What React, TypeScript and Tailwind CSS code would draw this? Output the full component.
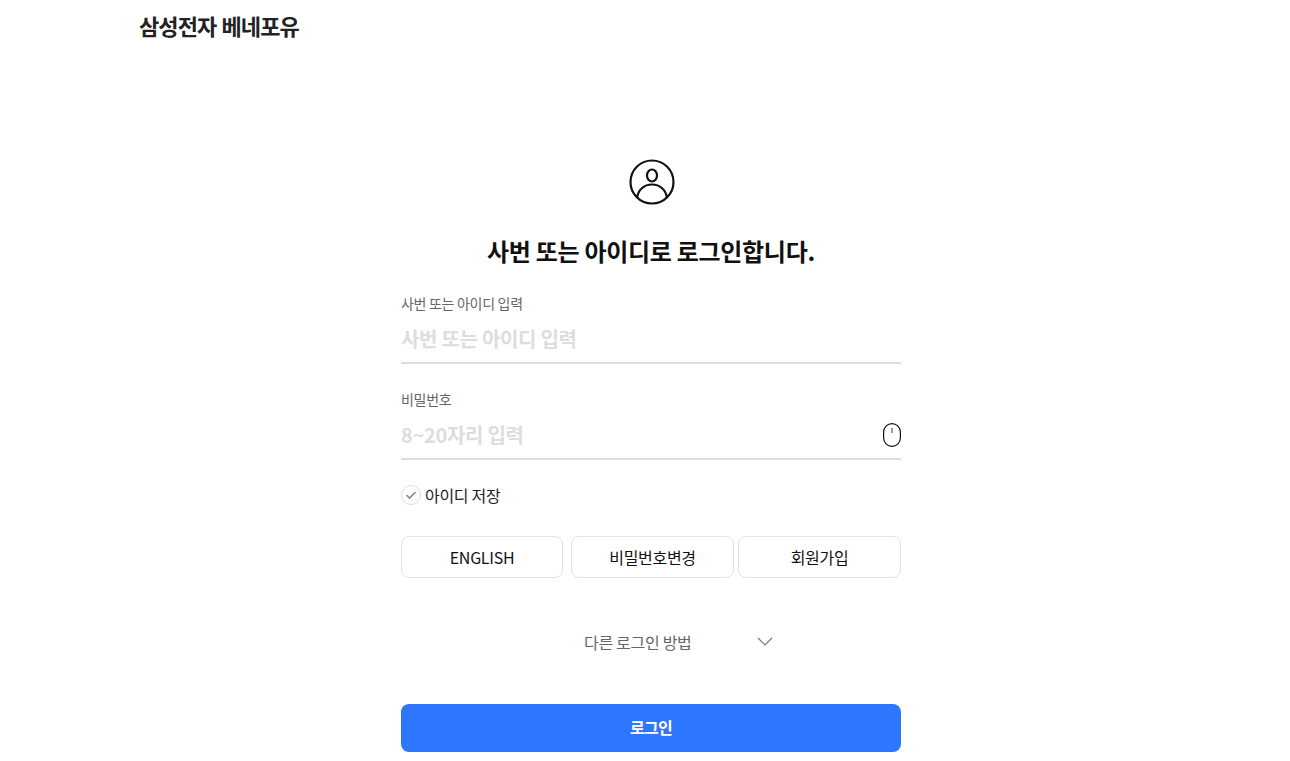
const font = "font-['Noto_Sans_CJK_KR','Noto_Sans',sans-serif]";

function Field({ label, placeholder, eye }: { label: string; placeholder: string; eye?: boolean }) {
  return (
    <div className="w-[500px] h-[96px]">
      <div className="h-[24px] text-[14px] leading-[22px] tracking-[-0.3px] text-[#666666]">{label}</div>
      <div className="h-[48px] flex items-center justify-between border-b-2 border-[#dddddd]">
        <input
          readOnly
          placeholder={placeholder}
          className="flex-1 min-w-0 h-full pb-[2px] outline-none bg-white text-[20px] font-bold tracking-[-0.3px] placeholder:text-[#dddddd]"
        />
        {eye && (
          <svg width="18" height="24" viewBox="0 0 18 24" fill="none">
            <rect x="0.6" y="0.6" width="16.8" height="22.8" rx="8.4" stroke="#111111" strokeWidth="1.2" />
            <line x1="9" y1="5" x2="9" y2="10" stroke="#777777" strokeWidth="1.4" />
          </svg>
        )}
      </div>
    </div>
  );
}

function Btn({ w, children }: { w: string; children: string }) {
  return (
    <button className={`${w} h-[42px] rounded-[8px] border border-[#e2e2ea] bg-white text-[16px] tracking-[-0.3px] text-[#111111]`}>
      {children}
    </button>
  );
}

export default function App() {
  return (
    <div className={`${font} w-[1290px] h-[761px] overflow-hidden bg-white`}>
      <header className="h-[56px] pl-[139px] pt-[7px]">
        <div className="text-[22px] leading-[36px] font-bold tracking-[-0.9px] [word-spacing:1px] text-[#222222]">삼성전자 베네포유</div>
      </header>
      <main className="flex flex-col items-center pl-[12px]">
        <svg width="46" height="46" viewBox="0 0 46 46" fill="none" className="mt-[103px] ml-[1px]">
          <circle cx="23" cy="23" r="21.5" stroke="#111111" strokeWidth="2.2" />
          <ellipse cx="23" cy="16.5" rx="5" ry="6" stroke="#111111" strokeWidth="2.2" />
          <path d="M8 39 C9 31 15 25.5 23 25.5 C31 25.5 37 31 38 39" stroke="#111111" strokeWidth="2.2" />
        </svg>
        <h1 className="mt-[24px] h-[44px] text-[24px] leading-[44px] font-bold tracking-[-0.3px] text-[#111111]">
          사번 또는 아이디로 로그인합니다.
        </h1>
        <div className="mt-[19px]">
          <Field label="사번 또는 아이디 입력" placeholder="사번 또는 아이디 입력" />
          <Field label="비밀번호" placeholder="8~20자리 입력" eye />
        </div>
        <div className="w-[500px] mt-[-1px] h-[24px] flex items-center gap-[4px]">
          <span className="w-[20px] h-[20px] rounded-full border border-[#dddde5] flex items-center justify-center">
            <svg width="12" height="10" viewBox="0 0 12 10" fill="none">
              <path d="M1.5 5 L4.5 8 L10.5 2" stroke="#888888" strokeWidth="1.6" />
            </svg>
          </span>
          <span className="text-[16px] tracking-[-0.3px] text-[#222222]">아이디 저장</span>
        </div>
        <div className="w-[500px] mt-[29px] flex justify-between">
          <Btn w="w-[162px]">ENGLISH</Btn>
          <Btn w="w-[163px] ml-[8px]">비밀번호변경</Btn>
          <Btn w="w-[163px] ml-[4px]">회원가입</Btn>
        </div>
        <div className="w-[500px] mt-[48px] h-[32px] flex items-center text-[16px] tracking-[-0.3px] text-[#666666]">
          <span className="ml-[183px]">다른 로그인 방법</span>
          <svg width="16" height="10" viewBox="0 0 16 10" fill="none" className="ml-[65px]">
            <path d="M1 1 L8 8 L15 1" stroke="#777777" strokeWidth="1.2" />
          </svg>
        </div>
        <button className="w-[500px] h-[48px] mt-[46px] pb-[2px] rounded-[8px] bg-[#2f76ff] text-white text-[16px] font-bold tracking-[-0.7px]">
          로그인
        </button>
      </main>
    </div>
  );
}
